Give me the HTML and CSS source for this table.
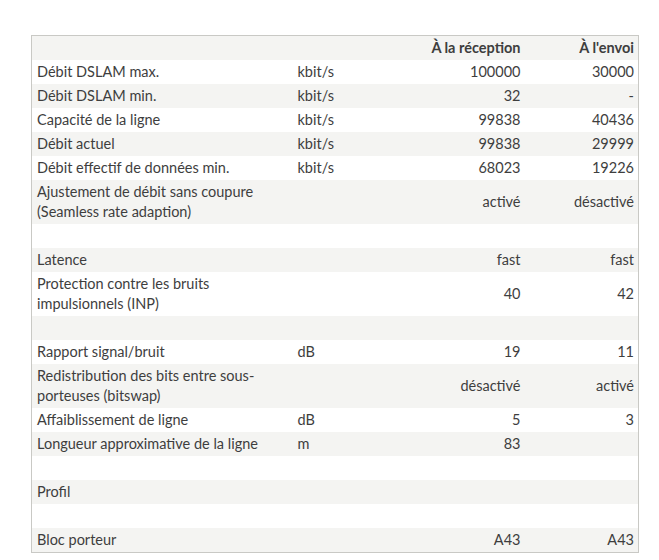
FILE: index.html
```html
<!DOCTYPE html>
<html lang="fr">
<head>
<meta charset="utf-8">
<link rel="stylesheet" href="styles.css">
</head>
<body>
<div class="page">
<table class="dsl">
<colgroup><col class="c-label"><col class="c-unit"><col class="c-rx"><col class="c-tx"></colgroup>
<thead>
<tr><th></th><th></th><th class="num">À la réception</th><th class="num">À l'envoi</th></tr>
</thead>
<tbody>
<tr><td>Débit DSLAM max.</td><td>kbit/s</td><td class="num">100000</td><td class="num">30000</td></tr>
<tr><td>Débit DSLAM min.</td><td>kbit/s</td><td class="num">32</td><td class="num">-</td></tr>
<tr><td>Capacité de la ligne</td><td>kbit/s</td><td class="num">99838</td><td class="num">40436</td></tr>
<tr><td>Débit actuel</td><td>kbit/s</td><td class="num">99838</td><td class="num">29999</td></tr>
<tr><td>Débit effectif de données min.</td><td>kbit/s</td><td class="num">68023</td><td class="num">19226</td></tr>
<tr><td>Ajustement de débit sans coupure (Seamless rate adaption)</td><td></td><td class="num">activé</td><td class="num">désactivé</td></tr>
<tr><td>&nbsp;</td><td></td><td></td><td></td></tr>
<tr><td>Latence</td><td></td><td class="num">fast</td><td class="num">fast</td></tr>
<tr><td>Protection contre les bruits impulsionnels (INP)</td><td></td><td class="num">40</td><td class="num">42</td></tr>
<tr><td>&nbsp;</td><td></td><td></td><td></td></tr>
<tr><td>Rapport signal/bruit</td><td>dB</td><td class="num">19</td><td class="num">11</td></tr>
<tr><td>Redistribution des bits entre sous-porteuses (bitswap)</td><td></td><td class="num">désactivé</td><td class="num">activé</td></tr>
<tr><td>Affaiblissement de ligne</td><td>dB</td><td class="num">5</td><td class="num">3</td></tr>
<tr><td>Longueur approximative de la ligne</td><td>m</td><td class="num">83</td><td class="num"></td></tr>
<tr><td>&nbsp;</td><td></td><td></td><td></td></tr>
<tr><td>Profil</td><td></td><td class="num"></td><td class="num"></td></tr>
<tr><td>&nbsp;</td><td></td><td></td><td></td></tr>
<tr><td>Bloc porteur</td><td></td><td class="num">A43</td><td class="num">A43</td></tr>
</tbody>
</table>
</div>
</body>
</html>
```
FILE: styles.css
```css
html, body {
  margin: 0;
  padding: 0;
  background: #ffffff;
}
.page {
  padding: 35px 0 0 31px;
}
.dsl {
  width: 607px;
  border-collapse: collapse;
  border: 1px solid #c9c9c5;
  font-family: Lato, "Liberation Sans", sans-serif;
  font-size: 14.5px;
  line-height: 20px;
  color: #3e3e3e;
  table-layout: fixed;
}
.c-label { width: 261px; }
.c-unit { width: 118px; }
.c-rx { width: 114px; }
.c-tx { width: 114px; }
.dsl th, .dsl td {
  padding: 2px 4px 2px 5px;
  text-align: left;
  vertical-align: middle;
}
.dsl th {
  font-weight: 700;
}
.dsl .num {
  text-align: right;
}
.dsl thead tr {
  background: #f4f4f2;
}
.dsl tbody tr:nth-child(even) {
  background: #f4f4f2;
}
.dsl tbody tr:nth-child(odd) {
  background: #ffffff;
}
```
